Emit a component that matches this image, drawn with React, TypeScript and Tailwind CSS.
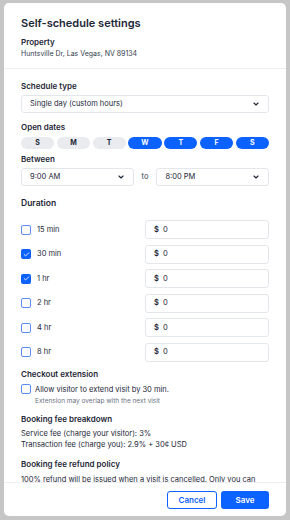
import { ChevronDown, Check } from "lucide-react";

const days = [
  { d: "S", on: false },
  { d: "M", on: false },
  { d: "T", on: false },
  { d: "W", on: true },
  { d: "T", on: true },
  { d: "F", on: true },
  { d: "S", on: true },
];

const durations = [
  { label: "15 min", on: false },
  { label: "30 min", on: true },
  { label: "1 hr", on: true },
  { label: "2 hr", on: false },
  { label: "4 hr", on: false },
  { label: "8 hr", on: false },
];

const Box = ({ on }: { on: boolean }) =>
  on ? (
    <span className="flex items-center justify-center w-[10px] h-[10px] rounded-[2px] bg-[#0b62ff]">
      <Check size={7} strokeWidth={3} className="text-white" />
    </span>
  ) : (
    <span className="block w-[10px] h-[10px] rounded-[2px] border border-[#5b8cf7] bg-white" />
  );

const Select = ({ value, className = "" }: { value: string; className?: string }) => (
  <div
    className={`flex items-center justify-between h-[18px] px-2 border border-[#e3e6eb] rounded-[3px] bg-white ${className}`}
  >
    <span className="text-[7.5px] text-[#1d2636]">{value}</span>
    <ChevronDown size={8} strokeWidth={3.5} className="text-[#1d2636]" />
  </div>
);

const Label = ({ children, className = "" }: { children: React.ReactNode; className?: string }) => (
  <div className={`text-[8px] leading-[12px] font-semibold text-[#1d2636] ${className}`}>{children}</div>
);

export default function App() {
  return (
    <div
      className="w-[290px] h-[520px] bg-[#c6c6c6] pt-[3px] pb-[4px] px-[4px]"
      style={{ fontFamily: "Inter, 'Noto Sans', sans-serif" }}
    >
      <div className="flex flex-col h-full bg-white rounded-[5px] overflow-hidden">
        {/* header */}
        <div className="px-[17px] pt-[11px] pb-[9px] border-b border-[#eceef1]">
          <div className="text-[11px] leading-[18px] font-semibold text-[#1d2636]">
            Self-schedule settings
          </div>
          <div className="mt-[4px] text-[8px] leading-[12px] font-semibold text-[#1d2636]">Property</div>
          <div className="text-[7px] leading-[11px] text-[#333d4d]">Huntsville Dr, Las Vegas, NV 89134</div>
        </div>

        {/* body */}
        <div className="flex-1 overflow-hidden px-[17px] pt-[11px]">
          <Label>Schedule type</Label>
          <Select value="Single day (custom hours)" className="mt-[3px]" />

          <Label className="mt-[8px]">Open dates</Label>
          <div className="mt-[4px] grid grid-cols-7 gap-[2.5px]">
            {days.map((x, i) => (
              <div
                key={i}
                className={`flex items-center justify-center h-[12px] rounded-full text-[7px] font-bold ${
                  x.on ? "bg-[#0b62ff] text-white" : "bg-[#e9ebef] text-[#1d2636]"
                }`}
              >
                {x.d}
              </div>
            ))}
          </div>

          <Label className="mt-[4px]">Between</Label>
          <div className="mt-[3px] flex items-center gap-[8px]">
            <Select value="9:00 AM" className="flex-1" />
            <span className="text-[7.5px] text-[#333d4d]">to</span>
            <Select value="8:00 PM" className="flex-1" />
          </div>

          <div className="mt-[11px] text-[8.5px] leading-[12px] font-semibold text-[#1d2636]">Duration</div>
          <div className="mt-[11px] flex flex-col gap-[5.5px]">
            {durations.map((r) => (
              <div key={r.label} className="grid grid-cols-[1fr_124px] items-center">
                <div className="flex items-center gap-[6px]">
                  <Box on={r.on} />
                  <span className="text-[7.5px] text-[#1d2636]">{r.label}</span>
                </div>
                <div className="flex items-center h-[19px] px-[8px] gap-[4px] border border-[#e3e6eb] rounded-[3px] text-[7.5px] text-[#1d2636]">
                  <span className="font-semibold">$</span>
                  <span>0</span>
                </div>
              </div>
            ))}
          </div>

          <Label className="mt-[6px]">Checkout extension</Label>
          <div className="mt-[3px] flex items-center gap-[4px]">
            <Box on={false} />
            <span className="text-[7.5px] leading-[13px] text-[#1d2636]">
              Allow visitor to extend visit by 30 min.
            </span>
          </div>
          <div className="pl-[14px] text-[6.5px] leading-[10px] text-[#6b7280]">
            Extension may overlap with the next visit
          </div>

          <Label className="mt-[7px]">Booking fee breakdown</Label>
          <div className="mt-[3.5px] text-[7.5px] leading-[11px] text-[#1d2636]">
            <div>Service fee (charge your visitor): 3%</div>
            <div>Transaction fee (charge you): 2.9% + 30¢ USD</div>
          </div>

          <Label className="mt-[7.5px]">Booking fee refund policy</Label>
          <div className="mt-[4px] text-[7.5px] leading-[11px] text-[#1d2636]">
            100% refund will be issued when a visit is cancelled. Only you can cancel a visit once it has been
            booked.
          </div>
        </div>

        {/* footer */}
        <div className="flex justify-end gap-[4px] px-[17px] pt-[8px] pb-[8px] h-[34px] border-t border-[#eceef1]">
          <button className="w-[50px] h-[18px] rounded-[3px] border border-[#0b62ff] bg-white text-[8px] font-semibold text-[#0b62ff]">
            Cancel
          </button>
          <button className="w-[48px] h-[18px] rounded-[3px] bg-[#0b62ff] text-[8px] font-semibold text-white">
            Save
          </button>
        </div>
      </div>
    </div>
  );
}
